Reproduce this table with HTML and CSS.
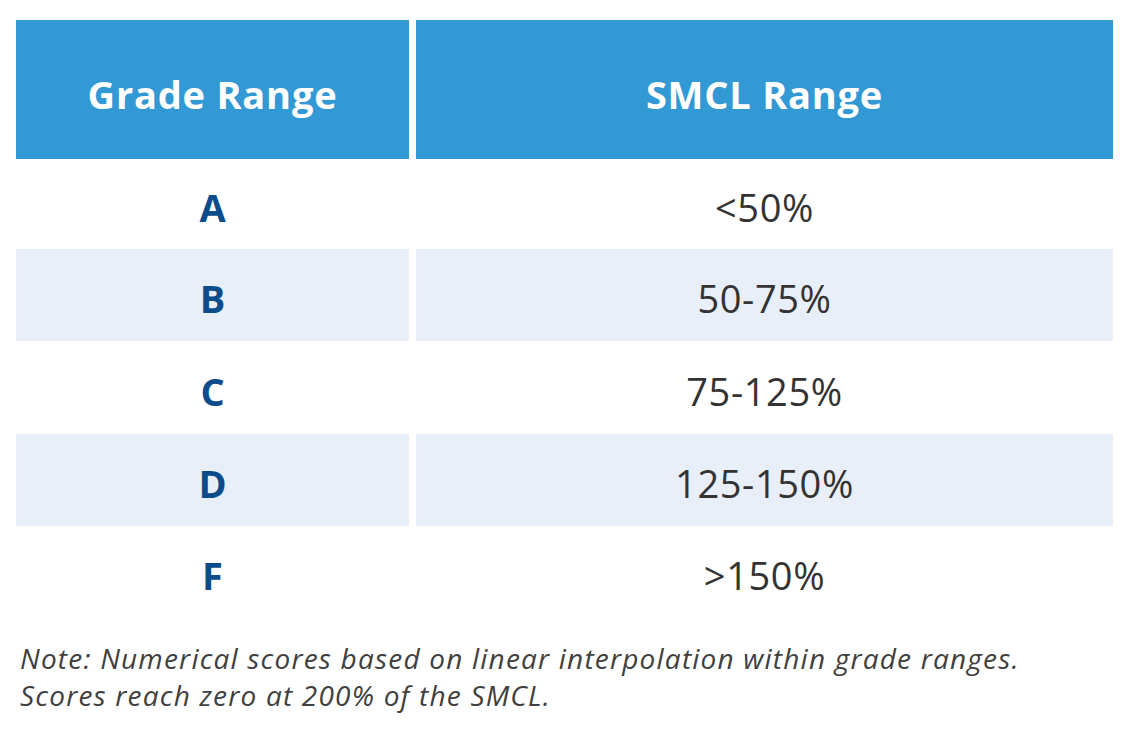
FILE: index.html
```html
<!DOCTYPE html>
<html lang="en">
<head>
<meta charset="utf-8">
<title>Grade Range</title>
<link rel="stylesheet" href="styles.css">
</head>
<body>
<div class="page">
  <div class="grade-table">
    <div class="cell head">Grade Range</div>
    <div class="cell head">SMCL Range</div>

    <div class="cell grade">A</div>
    <div class="cell value">&lt;50%</div>

    <div class="cell grade alt">B</div>
    <div class="cell value alt">50-75%</div>

    <div class="cell grade">C</div>
    <div class="cell value">75-125%</div>

    <div class="cell grade alt">D</div>
    <div class="cell value alt">125-150%</div>

    <div class="cell grade">F</div>
    <div class="cell value">&gt;150%</div>
  </div>
  <p class="note">Note: Numerical scores based on linear interpolation within grade ranges.<br>Scores reach zero at 200% of the SMCL.</p>
</div>
</body>
</html>
```
FILE: styles.css
```css
html, body {
  margin: 0;
  padding: 0;
  background: #ffffff;
}
.page {
  padding: 20px 15px 0 16px;
  font-family: "Open Sans", "Noto Sans", sans-serif;
}
.grade-table {
  display: grid;
  grid-template-columns: 393px 697px;
  grid-template-rows: 139px 90px 92px 93px 92px 92px;
  column-gap: 7px;
}
.cell {
  display: flex;
  align-items: center;
  justify-content: center;
  padding-top: 6px;
  box-sizing: border-box;
}
.head {
  background: #3399d4;
  color: #ffffff;
  font-weight: 700;
  font-size: 38px;
  letter-spacing: 0.8px;
  padding-top: 8px;
}
.grade {
  color: #0d4c8b;
  font-weight: 700;
  font-size: 38px;
}
.value {
  color: #333333;
  font-size: 38px;
  letter-spacing: 0.6px;
}
.alt {
  background: #e8eff8;
}
.note {
  margin: 22px 0 0 4px;
  font-style: italic;
  font-weight: 520;
  font-size: 28px;
  line-height: 37px;
  color: #404040;
  letter-spacing: 1.2px;
}
```
